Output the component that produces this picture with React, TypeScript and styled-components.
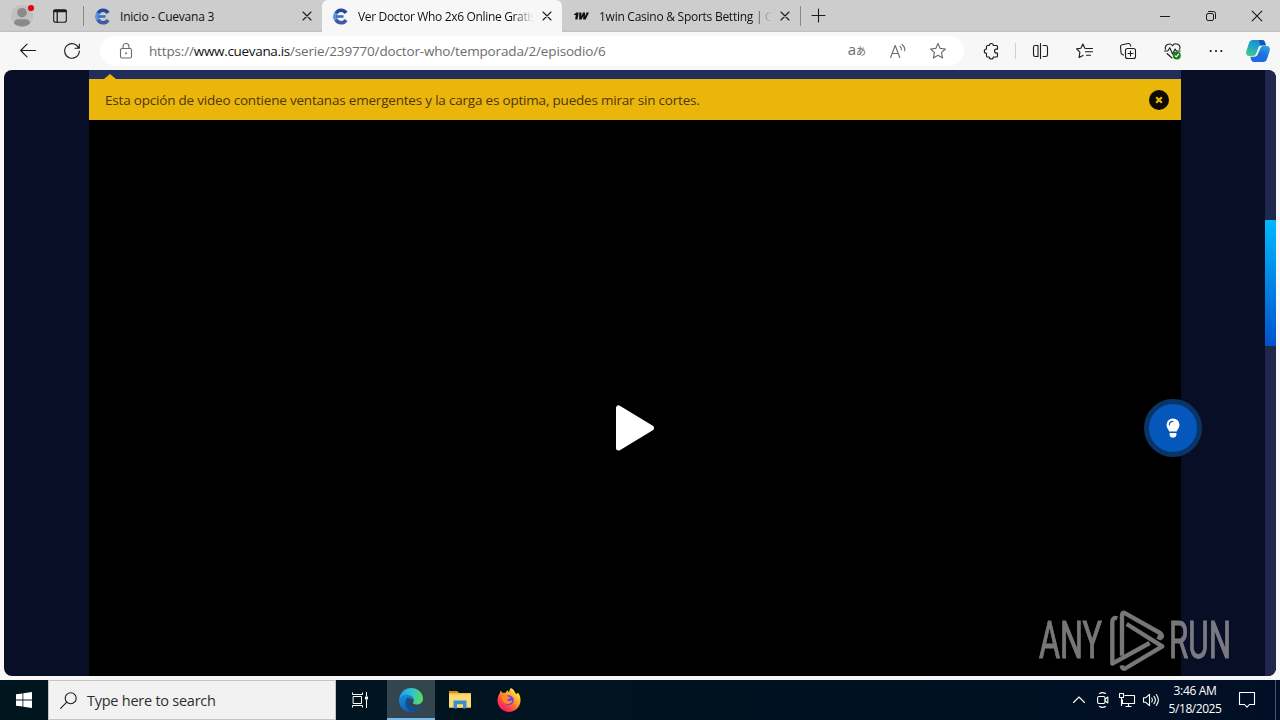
import React from "react";
import styled, { createGlobalStyle } from "styled-components";

const ORIGIN = "https://";
const HOST = "www.cuevana.is";
const PATH = "/serie/239770/doctor-who/temporada/2/episodio/6";

const App = () => {
  return (
    <Screen>
      <GlobalStyle />
      <TabStrip>
        <StripCell $width={44}>
          <ProfileIcon />
        </StripCell>
        <StripCell $width={32}>
          <WorkspaceIcon />
        </StripCell>
        <Divider $height={20} $left={7} />
        <Tab $width={238}>
          <CuevanaIcon />
          <TabTitle $track={-0.22}>Inicio - Cuevana 3</TabTitle>
          <CloseIcon />
        </Tab>
        <Tab $width={240} $active>
          <CuevanaIcon />
          <TabTitle $track={-0.34} $fade>
            Ver Doctor Who 2x6 Online Gratis
          </TabTitle>
          <CloseIcon />
        </Tab>
        <Tab $width={238}>
          <OneWinIcon />
          <TabTitle $track={-0.26} $fade>
            1win Casino &amp; Sports Betting | Of
          </TabTitle>
          <CloseIcon />
        </Tab>
        <Divider $height={20} $left={0} />
        <StripCell $width={36}>
          <PlusIcon />
        </StripCell>
        <WindowButtons>
          <StripCell $width={46}>
            <MinimizeIcon />
          </StripCell>
          <StripCell $width={46}>
            <RestoreIcon />
          </StripCell>
          <StripCell $width={46}>
            <WindowCloseIcon />
          </StripCell>
        </WindowButtons>
      </TabStrip>

      <Toolbar>
        <ToolCell>
          <BackIcon />
        </ToolCell>
        <ToolCell>
          <ReloadIcon />
        </ToolCell>
        <AddressBar>
          <LockIcon />
          <Url>
            {ORIGIN}
            <b>{HOST}</b>
            {PATH}
          </Url>
          <AddressActions>
            <Translate>
              a<small>あ</small>
            </Translate>
            <ReadAloudIcon />
            <StarIcon />
          </AddressActions>
        </AddressBar>
        <ToolCell $left={5}>
          <PuzzleIcon />
        </ToolCell>
        <Divider $height={16} $left={2} $light />
        <ToolCell $left={2}>
          <SplitIcon />
        </ToolCell>
        <ToolCell>
          <FavoritesIcon />
        </ToolCell>
        <ToolCell>
          <CollectionsIcon />
        </ToolCell>
        <ToolCell>
          <HeartIcon />
        </ToolCell>
        <ToolCell>
          <DotsIcon />
        </ToolCell>
        <ToolCell $width={40}>
          <CopilotIcon />
        </ToolCell>
      </Toolbar>

      <Page>
        <Player>
          <PlayerTop>
            <Arrow />
          </PlayerTop>
          <Notice>
            <NoticeText>
              Esta opción de video contiene ventanas emergentes y la carga es
              optima, puedes mirar sin cortes.
            </NoticeText>
            <NoticeClose>
              <svg width="8" height="8" viewBox="0 0 8 8">
                <path
                  d="M1.2 1.2 6.8 6.8M6.8 1.2 1.2 6.8"
                  stroke="#ebb60a"
                  strokeWidth="2.2"
                />
              </svg>
            </NoticeClose>
          </Notice>
          <Video>
            <PlayIcon />
          </Video>
        </Player>
        <Scrollbar>
          <Thumb />
        </Scrollbar>
        <LightButton>
          <BulbIcon />
        </LightButton>
        <Watermark>
          <WatermarkLogo />
        </Watermark>
      </Page>

      <Taskbar>
        <TaskCell $width={48}>
          <WindowsIcon />
        </TaskCell>
        <Search>
          <SearchIcon />
          <span>Type here to search</span>
        </Search>
        <TaskCell $width={48} $gap={3}>
          <TaskViewIcon />
        </TaskCell>
        <TaskCell $width={48} $active>
          <EdgeIcon />
        </TaskCell>
        <TaskCell $width={49}>
          <ExplorerIcon />
        </TaskCell>
        <TaskCell $width={49}>
          <FirefoxIcon />
        </TaskCell>
        <Tray>
          <TrayCell>
            <ChevronIcon />
          </TrayCell>
          <TrayCell>
            <MeetIcon />
          </TrayCell>
          <TrayCell>
            <NetworkIcon />
          </TrayCell>
          <TrayCell>
            <SoundIcon />
          </TrayCell>
          <Clock>
            <ClockLine $track={-0.35}>3:46 AM</ClockLine>
            <ClockLine $track={-0.45}>5/18/2025</ClockLine>
          </Clock>
          <Action>
            <ActionIcon />
          </Action>
          <ShowDesktop />
        </Tray>
      </Taskbar>
    </Screen>
  );
};

/* icons */

const Line = styled.svg`
  display: block;
  flex: none;
  overflow: visible;
  fill: none;
  stroke: #1b1b1b;
  stroke-width: 1.1;
  stroke-linecap: round;
  stroke-linejoin: round;
`;

const GreyLine = styled(Line)`
  stroke: #6a6a6a;
`;

const Tiny = styled(Line)`
  stroke: #fff;
`;

const ProfileIcon = () => (
  <Line width="24" height="24" viewBox="0 0 24 24">
    <circle cx="12" cy="12" r="11" fill="#c2c0be" stroke="none" />
    <circle cx="12" cy="8.7" r="4.8" fill="#8c8a88" stroke="none" />
    <path
      d="M4 19.5c0-3 2-4.3 4-4.3h8c2 0 4 1.3 4 4.3-2 2-5 3-8 3s-6-1-8-3z"
      fill="#8c8a88"
      stroke="none"
    />
    <circle cx="21" cy="4" r="3.1" fill="#e30613" stroke="none" />
  </Line>
);

const WorkspaceIcon = () => (
  <Line width="14" height="14" viewBox="0 0 14 14">
    <rect x="0.7" y="0.7" width="12.6" height="12.6" rx="2" />
    <path d="M4.2 3v10" strokeWidth="1.3" />
    <path d="M1.3 2h11.4" strokeWidth="2.6" />
  </Line>
);

const CuevanaIcon = () => (
  <Line width="15" height="15" viewBox="0 0 15 15">
    <g strokeLinecap="butt">
      <path d="M13 4A5.700 5.700 0 0 0 3 4.400" stroke="#27489d" strokeWidth="3.6" />
      <path d="M3.2 4A5.7 5.7 0 0 0 3.2 11" stroke="#5793de" strokeWidth="3.6" />
      <path d="M3 10.600A5.700 5.700 0 0 0 13 11" stroke="#3d5ca3" strokeWidth="3.6" />
      <path d="M3 7.500h7.500" stroke="#3c6cc6" strokeWidth="2.6" />
    </g>
  </Line>
);

const OneWinIcon = () => (
  <Line width="16" height="8" viewBox="0 0 17 8">
    <path
      d="M1 2.3 3.600 .3H6L4.800 7.800H2.300L3 3H1zM6.600 .3H9L8.800 4.600 10.600 .3h2.200l-.1 4.300L14.400 .3H17L13.400 7.800h-2.600l.1-3.700-1.700 3.700H6.500z"
      fill="#101010"
      stroke="none"
    />
  </Line>
);

const CloseIcon = () => (
  <Line width="8" height="8" viewBox="0 0 8 8">
    <path d="M0 0 8 8M8 0 0 8" />
  </Line>
);

const PlusIcon = () => (
  <Line width="14" height="14" viewBox="0 0 14 14">
    <path d="M0 6.500h13M6.500 0v13" />
  </Line>
);

const MinimizeIcon = () => (
  <Line width="10" height="10" viewBox="0 0 10 10">
    <path d="M0 5.500h10" strokeLinecap="butt" strokeWidth="1" />
  </Line>
);

const RestoreIcon = () => (
  <Line width="10" height="10" viewBox="0 0 10 10">
    <rect x="0.5" y="2.5" width="7" height="7" rx="1.5" strokeWidth="1" />
    <path d="M2.500 .5h5a2 2 0 0 1 2 2v5" strokeWidth="1" />
  </Line>
);

const WindowCloseIcon = () => (
  <Line width="10" height="10" viewBox="0 0 10 10">
    <path d="M.2 .2 9.800 9.800M9.800 .2 .2 9.800" />
  </Line>
);

const BackIcon = () => (
  <Line width="16" height="14" viewBox="0 0 16 14">
    <path d="M15.500 6.500H.7M7 .2 .7 6.500 7 12.800" />
  </Line>
);

const ReloadIcon = () => (
  <Line width="16" height="16" viewBox="0 0 16 16">
    <path d="M14.800 5.300A7.300 7.300 0 1 0 15.300 8M15.300 1v4.300h-4.300" />
  </Line>
);

const LockIcon = () => (
  <GreyLine width="12" height="16" viewBox="0 0 12 16">
    <rect x="0.5" y="5.5" width="11" height="9.5" rx="1.5" />
    <path d="M3 5.500V3.500a3 3 0 0 1 6 0v2" />
    <circle cx="6" cy="10.3" r="0.4" />
  </GreyLine>
);

const ReadAloudIcon = () => (
  <GreyLine width="16" height="14" viewBox="0 0 16 14">
    <path d="M.6 13.500 5.200 1.500 9.800 13.500M2.200 9.500h6" />
    <path d="M10 2.300q1.600 1.300 1.400 3.500M12 .5q3.200 2.500 2.800 6.300" />
  </GreyLine>
);

const StarIcon = () => (
  <GreyLine width="16" height="16" viewBox="0 0 16 16">
    <path d="M8 .6 10.200 5.400 15.400 6 11.500 9.600 12.600 14.900 8 12.300 3.400 14.900 4.500 9.600 .6 6 5.800 5.400z" />
  </GreyLine>
);

const PuzzleIcon = () => (
  <Line width="16" height="16" viewBox="0 0 16 16">
    <path d="M4.500 2.500h1.800a2 2 0 0 1 4 0h3.200a1 1 0 0 1 1 1v2.600h-1a2 2 0 0 0 0 4h1v2.900a1 1 0 0 1-1 1h-3.200a2 2 0 0 1-4 0H4.500a1 1 0 0 1-1-1v-2.600a2.200 2.200 0 0 1 0-4.400V3.500a1 1 0 0 1 1-1z" />
  </Line>
);

const SplitIcon = () => (
  <Line width="15" height="16" viewBox="0 0 15 16">
    <path d="M5 2.500H2.200A1.700 1.700 0 0 0 .5 4.200v7.600a1.700 1.700 0 0 0 1.700 1.700H5zM10 2.500h2.800a1.700 1.700 0 0 1 1.700 1.700v7.600a1.700 1.700 0 0 1-1.700 1.700H10M7.500 .5v15" />
  </Line>
);

const FavoritesIcon = () => (
  <Line width="17" height="16" viewBox="0 0 17 16">
    <path d="M10.500 5.500 8.800 5.300 6.900 1 4.900 5.200 .6 5.900 3.900 9.100 3.100 14.400 7 12.400M10.500 5.500h6M9.500 8.800h7M10.500 12.200h4" />
  </Line>
);

const CollectionsIcon = () => (
  <Line width="16" height="16" viewBox="0 0 16 16">
    <rect x="5.5" y="5.5" width="10" height="10" rx="2" />
    <path d="M10.500 8v5M8 10.500h5M3.500 12 2 11.300a2 2 0 0 1-1-1.800L.5 3.500a2 2 0 0 1 1.700-1.800l6-1.200a2 2 0 0 1 2.200 1.400l.4 1.200" />
  </Line>
);

const HeartIcon = () => (
  <Line width="17" height="17" viewBox="0 0 17 17">
    <path d="M1.500 6.300A4 4 0 0 1 8.500 2.700 4 4 0 0 1 15.600 6.300M3 10.500 8 15" />
    <path d="M.5 8h3.300l2-3.300L8.600 11l2.500-5 1.300 2h3.800" />
    <circle cx="12.8" cy="12.5" r="4" fill="#13801a" stroke="none" />
    <path d="m11.200 12.800 1.100 1 2.300-2.600" stroke="#fff" />
  </Line>
);

const DotsIcon = () => (
  <Line width="14" height="4" viewBox="0 0 14 4">
    <g fill="#1b1b1b" stroke="none">
      <circle cx="1.7" cy="2" r="1.1" />
      <circle cx="7" cy="2" r="1.1" />
      <circle cx="12.3" cy="2" r="1.1" />
    </g>
  </Line>
);

const CopilotIcon = () => (
  <Line width="24" height="22" viewBox="0 0 24 22">
    <defs>
      <linearGradient id="copA" x1="0.6" y1="0" x2="0.2" y2="1">
        <stop offset="0" stopColor="#1a86d6" />
        <stop offset="0.5" stopColor="#22aac4" />
        <stop offset="1" stopColor="#48ca80" />
      </linearGradient>
      <linearGradient id="copB" x1="0.8" y1="0" x2="0.4" y2="1">
        <stop offset="0" stopColor="#2aa4e4" />
        <stop offset="0.5" stopColor="#1b74d8" />
        <stop offset="1" stopColor="#1e66ee" />
      </linearGradient>
    </defs>
    <path
      d="M7 0h9c2 0 2.700 1.500 3.200 3.500L19.800 5h-3.600c-2.200 0-3.300 1-4 3l-1.800 5c-.7 2-1.600 3-3.600 3H3.500C.5 16-.4 13.800.4 11L3 3C3.700 1 5 0 7 0z"
      fill="url(#copA)"
      stroke="none"
    />
    <path
      d="M13 0h3.200c2 0 2.700 1.500 3.200 3.500l.6 1.900h-6z"
      fill="#1156bd"
      stroke="none"
    />
    <path
      d="M17 22H8c-2 0-2.700-1.500-3.200-3.500L4.300 16.800H8c2.200 0 3.200-1 4-3l2.300-5.300C15 6.600 16 6 18 6h2.500c3 0 3.900 2.200 3.100 5L21 19c-.7 2-2 3-4 3z"
      fill="url(#copB)"
      stroke="none"
    />
  </Line>
);

const PlayIcon = () => (
  <svg width="40" height="46" viewBox="0 0 40 46">
    <path
      d="M3.500 3v40l33-20z"
      fill="#fff"
      stroke="#fff"
      strokeWidth="5"
      strokeLinejoin="round"
    />
  </svg>
);

const BulbIcon = () => (
  <svg width="14" height="20" viewBox="0 0 14 20">
    <path
      d="M7 .4a6.500 6.500 0 0 1 6.500 6.500c0 2.800-1.900 4-2.700 6.600H3.200C2.400 10.900.5 9.700.5 6.900A6.500 6.500 0 0 1 7 .4zM3.600 15h6.800v1.800c0 1.500-.9 2.600-2.300 2.600H5.900c-1.400 0-2.300-1.100-2.300-2.600z"
      fill="#fff"
    />
    <path
      d="M3.400 6.800A3.500 3.500 0 0 1 6.800 3.400"
      stroke="#0557bb"
      strokeWidth="1.2"
      fill="none"
      strokeLinecap="round"
    />
  </svg>
);

const WatermarkLogo = () => (
  <svg width="200" height="64" viewBox="0 0 200 64">
    <g
      fill="#a6a6a6"
      stroke="#a6a6a6"
      strokeWidth="1.1"
      fontFamily='"Roboto", "Liberation Sans", sans-serif'
      fontSize="51"
    >
      <text x="1" y="50" textLength="63" lengthAdjust="spacingAndGlyphs">
        ANY
      </text>
      <text x="131" y="50" textLength="62" lengthAdjust="spacingAndGlyphs">
        RUN
      </text>
    </g>
    <g
      transform="translate(66 -4) scale(.3333)"
      fill="none"
      stroke="#a6a6a6"
      strokeWidth="13"
      strokeLinejoin="round"
    >
      <path d="M40 43Q26 38 25 54V179L137 117" />
      <path d="M54 155V34Q54 22 64 28L168 87Q180 96 169 102L160 98" />
      <path d="M68 60 175 127 66 192Q55 198 53 184" />
    </g>
  </svg>
);

const WindowsIcon = () => (
  <svg width="16" height="16" viewBox="0 0 16 16">
    <path
      d="M0 2.300 6.500 1.400V7.500H0zM7.300 1.300 16 0v7.500H7.300zM0 8.400h6.500v6.200L0 13.700zM7.300 8.400H16V16l-8.700-1.300z"
      fill="#fff"
    />
  </svg>
);

const SearchIcon = () => (
  <Line width="17" height="17" viewBox="0 0 17 17">
    <circle cx="10.7" cy="6.2" r="5.5" />
    <path d="M6.800 10.100 .6 16.300" />
  </Line>
);

const TaskViewIcon = () => (
  <Tiny width="16" height="16" viewBox="0 0 16 16">
    <path
      d="M.5 .5v2h10v-2M.5 15.500v-2h10v2M14.500 0v4M14.500 8v8"
      strokeWidth="1"
      strokeLinecap="butt"
    />
    <rect x="1.5" y="4.5" width="8" height="7" strokeWidth="1" />
    <path d="M13 4.500h3v3h-3z" fill="#fff" stroke="none" />
  </Tiny>
);

const EdgeIcon = () => (
  <svg width="24" height="24" viewBox="0 0 24 24">
    <defs>
      <linearGradient id="edgeTop" x1="0" y1="0.4" x2="1" y2="0.5">
        <stop offset="0" stopColor="#1f9fe0" />
        <stop offset="0.5" stopColor="#2cc3cf" />
        <stop offset="1" stopColor="#62d957" />
      </linearGradient>
      <linearGradient id="edgeLow" x1="0" y1="0" x2="0.6" y2="1">
        <stop offset="0" stopColor="#1b8fe0" />
        <stop offset="1" stopColor="#1258ae" />
      </linearGradient>
    </defs>
    <path
      d="M.3 11C1 4.500 6 0 12 0c7 0 12 5 12 10.500 0 4-3 6-6.500 6-2.500 0-4-1-3.500-2 1.500-1.500 1-6.500-4.500-6.500C5 8 2 9 .3 11z"
      fill="url(#edgeTop)"
    />
    <path
      d="M0 12.500C.5 8.500 4 6.800 7.500 6.800c4 0 7 2.300 7 5-1.500-2-5.500-1.500-6 2-.5 4 3 7 7 7 2.700 0 5-.8 6.700-2C20 22 16.500 24 12 24 5 24 0 19 0 12.500z"
      fill="url(#edgeLow)"
    />
    <path
      d="M8.500 9.500C5 13 6 19.500 10.500 23c4.500 1.500 9-.5 11.700-4.200-5 2.500-11 .7-12.200-3.800-.6-2 0-3.500 1-4.500-.7-.8-1.700-1-2.500-1z"
      fill="#124f91"
    />
  </svg>
);

const ExplorerIcon = () => (
  <svg width="22" height="18" viewBox="0 0 22 18">
    <path d="M0 0h8l2 2h12v14.500H0z" fill="#f0bf4a" />
    <path d="M0 3.500h22v13H0z" fill="#fbdc74" />
    <path d="M0 0h8l1.500 2H0z" fill="#d98a12" />
    <path d="M4.500 9.500h13v8H14v-4H8v4H4.500z" fill="#3a8fd0" />
    <path d="M8 13.500h6v3H8z" fill="#fbdc74" />
  </svg>
);

const FirefoxIcon = () => (
  <svg width="24" height="24" viewBox="0 0 24 24">
    <defs>
      <linearGradient id="fox" x1="0.85" y1="0.1" x2="0.2" y2="0.95">
        <stop offset="0" stopColor="#fff04a" />
        <stop offset="0.4" stopColor="#ff9a22" />
        <stop offset="0.75" stopColor="#ff3d48" />
        <stop offset="1" stopColor="#f2156d" />
      </linearGradient>
    </defs>
    <path
      d="M14 0c3 1.500 4 4 4.500 5.500C20.500 6 21 5 21 4.500c2 2.500 2.500 5 2.500 8C23.500 19 18 24 12 24S.5 19 .5 12.800C.5 9.500 1.500 7 3 5c0-1 .3-2 1-2.500.2 1 .7 1.700 1.500 2.300 1-.2 2-.2 3 .2C9 3.500 9.800 2.800 11 2.300c0 1 .3 1.700 1.200 2C12.300 2.500 13 1 14 0z"
      fill="url(#fox)"
    />
    <circle cx="11.8" cy="12.3" r="5" fill="#7543e0" />
    <path
      d="M4.500 8.500c2-1.500 4.500-1.300 6.500 0 1.500.2 2.300.6 2.500 1.300-1 .9-2.500.7-3 1.700-.2 1.200.8 1.800 2 1.600 1.500-.2 2.300-.6 3 0-1 2.500-4.500 3.700-7 2.500-2.300-1.200-3.500-4-4-7.100z"
      fill="#ff8a26"
    />
  </svg>
);

const ChevronIcon = () => (
  <Tiny width="12" height="8" viewBox="0 0 12 8">
    <path d="M.5 6.500 6 1l5.500 5.500" />
  </Tiny>
);

const MeetIcon = () => (
  <Tiny width="12" height="16" viewBox="0 0 12 16">
    <rect x="0.6" y="4.5" width="7.4" height="7" rx="1.5" />
    <path d="M8 7.200 10.800 5v6L8 8.800M2.500 1.500q3-1.700 6 0M2.500 14.500q3 1.700 6 0" />
  </Tiny>
);

const NetworkIcon = () => (
  <Tiny width="16" height="15" viewBox="0 0 16 15">
    <path
      d="M5.500 2.500h10v8h-12v-4M.5 1v-.5h4v4h-4zM2.500 4.500V13M9.500 10.500v3M6.500 13.500h6"
      strokeLinecap="butt"
    />
  </Tiny>
);

const SoundIcon = () => (
  <Tiny width="17" height="14" viewBox="0 0 17 14">
    <path d="M.5 4.700h2.300L6.500 1.300v11.400L2.800 9.300H.5zM8.800 5q1.300 2 0 4M11 3.300q2.800 3.700 0 7.400M13.300 1.500q4.200 5.500 0 11" />
  </Tiny>
);

const ActionIcon = () => (
  <Tiny width="16" height="17" viewBox="0 0 16 17">
    <path d="M.5 .5h15v12H10.500L8 15.200 5.500 12.500h-5z" />
  </Tiny>
);

/* layout */

const GlobalStyle = createGlobalStyle`
  * {
    box-sizing: border-box;
  }
  body {
    margin: 0;
    overflow: hidden;
    font-family: "Open Sans", "Noto Sans", "Noto Sans CJK JP", sans-serif;
  }
`;

const Screen = styled.div`
  display: flex;
  flex-direction: column;
  width: 1280px;
  height: 720px;
  background-color: #f7f7f7;
`;

const TabStrip = styled.div`
  display: flex;
  align-items: center;
  height: 32px;
  background: linear-gradient(#cdcdcd 30px, #bdbdbd);
`;

const StripCell = styled.div<{ $width: number }>`
  display: flex;
  align-items: center;
  justify-content: center;
  width: ${({ $width }) => $width}px;
  height: 32px;
`;

const Divider = styled.div<{
  $height: number;
  $left: number;
  $light?: boolean;
}>`
  flex: none;
  width: 1px;
  height: ${({ $height }) => $height}px;
  margin-left: ${({ $left }) => $left}px;
  background-color: ${({ $light }) => ($light ? "#cfcfcf" : "#8a8a8a")};
`;

const Tab = styled.div<{ $width: number; $active?: boolean }>`
  display: flex;
  flex: none;
  align-items: center;
  width: ${({ $width }) => $width}px;
  height: 32px;
  padding: 0 11px;
  border-radius: 6px 6px 0 0;
  background-color: ${({ $active }) => ($active ? "#f7f7f7" : "transparent")};
`;

const TabTitle = styled.span<{ $track: number; $fade?: boolean }>`
  flex: 1;
  margin: 0 9px 0 10px;
  overflow: hidden;
  color: #111;
  font-size: 12px;
  letter-spacing: ${({ $track }) => $track}px;
  white-space: nowrap;
  ${({ $fade }) =>
    $fade && "mask-image: linear-gradient(90deg, #000 88%, transparent);"}
`;

const WindowButtons = styled.div`
  display: flex;
  margin-left: auto;
`;

const Toolbar = styled.div`
  display: flex;
  align-items: center;
  height: 38px;
  padding-left: 6px;
`;

const ToolCell = styled.div<{ $left?: number; $width?: number }>`
  display: flex;
  flex: none;
  align-items: center;
  justify-content: center;
  width: ${({ $width = 44 }) => $width}px;
  height: 38px;
  margin-left: ${({ $left = 0 }) => $left}px;
`;

const AddressBar = styled.div`
  display: flex;
  align-items: center;
  width: 864px;
  height: 30px;
  margin-left: 6px;
  padding: 0 18px 0 20px;
  border-radius: 15px;
  background-color: white;
`;

const Url = styled.div`
  margin-left: 17px;
  color: #6d6d6d;
  font-size: 13.5px;
  letter-spacing: -0.16px;
  white-space: nowrap;
  & > b {
    color: #111;
    font-weight: 400;
    letter-spacing: -0.32px;
  }
`;

const AddressActions = styled.div`
  display: flex;
  align-items: center;
  gap: 24px;
  margin-left: auto;
`;

const Translate = styled.span`
  color: #6a6a6a;
  font-size: 15px;
  line-height: 16px;
  transform: translateY(-1px);
  & > small {
    font-size: 10px;
  }
`;

const Page = styled.div`
  position: relative;
  display: flex;
  height: 606px;
  margin: 0 4px;
  padding-left: 85px;
  overflow: hidden;
  border-radius: 8px;
  background-color: #080e25;
`;

const Player = styled.div`
  display: flex;
  flex-direction: column;
  width: 1092px;
`;

const PlayerTop = styled.div`
  position: relative;
  height: 9px;
  background-color: #232d5c;
`;

const Arrow = styled.div`
  position: absolute;
  bottom: 0;
  left: 15px;
  border: 6px solid transparent;
  border-top: 0;
  border-bottom: 5px solid #ebb60a;
`;

const Notice = styled.div`
  display: flex;
  align-items: center;
  justify-content: space-between;
  height: 41px;
  padding: 0 12px 0 16px;
  background-color: #ebb60a;
`;

const NoticeText = styled.span`
  color: #4f3510;
  font-size: 13.5px;
  letter-spacing: -0.2px;
  white-space: nowrap;
`;

const NoticeClose = styled.div`
  display: flex;
  align-items: center;
  justify-content: center;
  width: 20px;
  height: 20px;
  border-radius: 50%;
  background-color: #0c0a02;
`;

const Video = styled.div`
  display: flex;
  flex: 1;
  align-items: center;
  justify-content: center;
  padding-top: 60px;
  background-color: #000;
`;

const Scrollbar = styled.div`
  width: 11px;
  margin-left: auto;
  padding-top: 150px;
  background-color: #20274c;
`;

const Thumb = styled.div`
  height: 126px;
  background: linear-gradient(#00b8ff, #0052cc);
`;

const LightButton = styled.div`
  position: absolute;
  top: 329px;
  left: 1140px;
  display: flex;
  align-items: center;
  justify-content: center;
  width: 58px;
  height: 58px;
  border: 5px solid #083566;
  border-radius: 50%;
  background-color: #0557bb;
`;

const Watermark = styled.div`
  position: absolute;
  top: 538px;
  left: 1034px;
  opacity: 0.72;
`;

const Taskbar = styled.div`
  display: flex;
  height: 40px;
  margin-top: 4px;
  background: linear-gradient(90deg, #00161f 0%, #00131f 45%, #010f26 100%);
`;

const TaskCell = styled.div<{
  $width: number;
  $gap?: number;
  $active?: boolean;
}>`
  display: flex;
  flex: none;
  align-items: center;
  justify-content: center;
  width: ${({ $width }) => $width}px;
  height: 40px;
  margin-right: ${({ $gap = 0 }) => $gap}px;
  ${({ $active }) =>
    $active &&
    "background-color: #334650; box-shadow: inset 0 -2px #76b9ed;"}
`;

const Search = styled.div`
  display: flex;
  align-items: center;
  gap: 10px;
  width: 288px;
  padding-left: 11px;
  border: 1px solid #c4c4c4;
  background-color: #f2f2f2;
  color: #2e2e2e;
  font-size: 14.5px;
  letter-spacing: -0.25px;
`;

const Tray = styled.div`
  display: flex;
  align-items: center;
  margin-left: auto;
  color: white;
`;

const TrayCell = styled.div`
  display: flex;
  align-items: center;
  justify-content: center;
  width: 24px;
`;

const Clock = styled.div`
  width: 64px;
  font-size: 12px;
  text-align: center;
`;

const ClockLine = styled.div<{ $track: number }>`
  height: 18px;
  line-height: 18px;
  letter-spacing: ${({ $track }) => $track}px;
`;

const Action = styled.div`
  display: flex;
  justify-content: center;
  width: 40px;
`;

const ShowDesktop = styled.div`
  width: 5px;
  height: 40px;
  margin-left: 8px;
  border-left: 1px solid #4b566a;
`;

export default App;
